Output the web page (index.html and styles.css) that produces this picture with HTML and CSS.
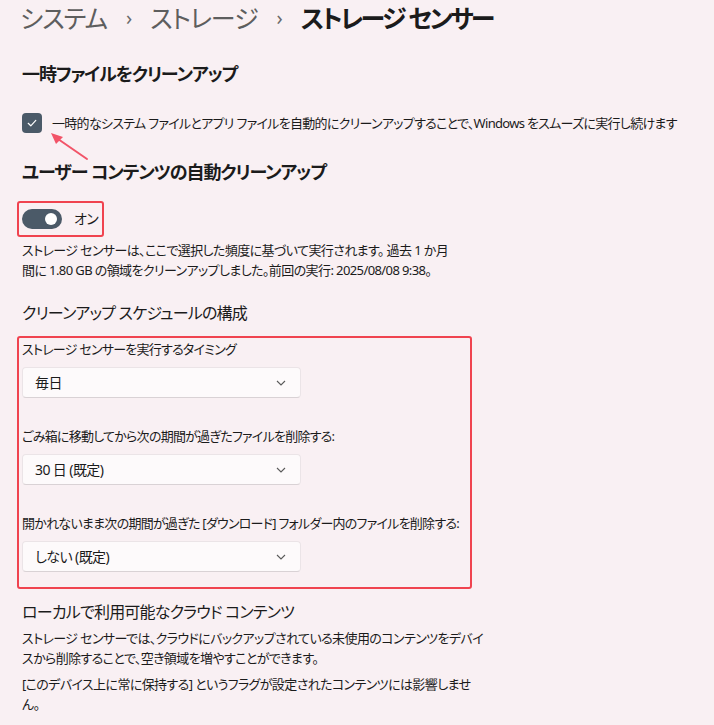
FILE: index.html
```html
<!DOCTYPE html>
<html lang="ja">
<head>
	<meta charset="UTF-8">
	<meta name="viewport" content="width=device-width, initial-scale=1.0">
	<title>ストレージ センサー</title>
	<link rel="stylesheet" href="styles.css">
</head>
<body>
	<main class="page">
		<nav class="crumbs">
			<span class="crumb">システム</span>
			<span class="crumb-sep">›</span>
			<span class="crumb">ストレージ</span>
			<span class="crumb-sep">›</span>
			<span class="crumb current">ストレージ センサー</span>
		</nav>

		<h2 class="section-title first">一時ファイルをクリーンアップ</h2>
		<label class="check-row">
			<span class="check-box">
				<svg width="12" height="12" viewBox="0 0 12 12"><path d="M2.2 6.3 L4.8 8.8 L9.8 3.4" fill="none" stroke="#fff" stroke-width="1.2" stroke-linecap="round" stroke-linejoin="round"/></svg>
			</span>
			<span>一時的なシステム ファイルとアプリ ファイルを自動的にクリーンアップすることで、Windows をスムーズに実行し続けます</span>
		</label>
		<!-- annotation arrow, sits over the page -->
		<svg class="note-arrow" width="50" height="34" viewBox="0 0 50 34">
			<path d="M46 30 L17 10" stroke="#f25468" stroke-width="2" stroke-linecap="round"/>
			<path d="M10 4 L22 8 L15 15 Z" fill="#f25468"/>
		</svg>

		<h2 class="section-title">ユーザー コンテンツの自動クリーンアップ</h2>
		<div class="toggle-row marked">
			<span class="toggle"><span class="knob"></span></span>
			<span class="toggle-label">オン</span>
		</div>
		<p class="desc tight">ストレージ センサーは、ここで選択した頻度に基づいて実行されます。 過去 1 か月<br>間に 1.80 GB の領域をクリーンアップしました。前回の実行: 2025/08/08 9:38。</p>

		<h3 class="sub-title">クリーンアップ スケジュールの構成</h3>
		<div class="schedule marked">
			<div class="field">
				<div class="field-label">ストレージ センサーを実行するタイミング</div>
				<div class="select"><span>毎日</span><svg class="chev" width="10" height="6" viewBox="0 0 10 6"><path d="M1 1 L5 5 L9 1" fill="none" stroke="#5a5a5a" stroke-width="1.1"/></svg></div>
			</div>
			<div class="field">
				<div class="field-label">ごみ箱に移動してから次の期間が過ぎたファイルを削除する:</div>
				<div class="select"><span>30 日 (既定)</span><svg class="chev" width="10" height="6" viewBox="0 0 10 6"><path d="M1 1 L5 5 L9 1" fill="none" stroke="#5a5a5a" stroke-width="1.1"/></svg></div>
			</div>
			<div class="field">
				<div class="field-label">開かれないまま次の期間が過ぎた [ダウンロード] フォルダー内のファイルを削除する:</div>
				<div class="select"><span>しない (既定)</span><svg class="chev" width="10" height="6" viewBox="0 0 10 6"><path d="M1 1 L5 5 L9 1" fill="none" stroke="#5a5a5a" stroke-width="1.1"/></svg></div>
			</div>
		</div>

		<h3 class="sub-title cloud">ローカルで利用可能なクラウド コンテンツ</h3>
		<p class="desc">ストレージ センサーでは、クラウドにバックアップされている未使用のコンテンツをデバイ<br>スから削除することで、空き領域を増やすことができます。</p>
		<p class="desc gap">[このデバイス上に常に保持する] というフラグが設定されたコンテンツには影響しませ<br>ん。</p>
	</main>
</body>
</html>
```

FILE: styles.css
```css
html, body {
  margin: 0;
  background: #f9f0f3;
}

body {
  font-family: "Noto Sans", "Noto Sans CJK JP", sans-serif;
  font-feature-settings: "palt";
  color: #1b1b1b;
  font-size: 13px;
  line-height: 20px;
  letter-spacing: -0.6px;
}

.page {
  position: relative;
  padding: 0 0 0 22px;
}

.crumbs {
  display: flex;
  align-items: center;
  gap: 12px;
  margin-left: -2px;
  font-size: 25px;
  line-height: 36px;
  letter-spacing: -1px;
  color: #5e5e5e;
  white-space: nowrap;
}
.crumb-sep {
  font-size: 20px;
  color: #6a6a6a;
  margin: 0 7px;
}
.crumb.current {
  color: #1b1b1b;
  font-weight: 600;
  letter-spacing: -2.5px;
}

.section-title {
  margin: 25px 0 0;
  font-size: 18px;
  line-height: 28px;
  letter-spacing: -1.1px;
  font-weight: 600;
}
.section-title.first {
  margin-top: 24px;
}

.check-row {
  display: flex;
  align-items: center;
  gap: 10px;
  margin-top: 25px;
  height: 20px;
  white-space: nowrap;
  letter-spacing: -0.7px;
}
.check-box {
  width: 20px;
  height: 20px;
  border-radius: 4px;
  background: #4b5a68;
  display: flex;
  align-items: center;
  justify-content: center;
  flex: none;
}

.note-arrow {
  position: absolute;
  left: 41px;
  top: 129px;
}

.marked {
  border: 2px solid #f0434f;
  border-radius: 3px;
}

.toggle-row {
  display: flex;
  align-items: center;
  gap: 12px;
  width: 87px;
  box-sizing: border-box;
  height: 36px;
  margin: 15px 0 0 -5px;
  padding-left: 3px;
  white-space: nowrap;
}
.toggle {
  width: 40px;
  height: 20px;
  border-radius: 10px;
  background: #4b5a68;
  display: flex;
  align-items: center;
  justify-content: flex-end;
  padding-right: 5px;
  box-sizing: border-box;
  flex: none;
}
.knob {
  width: 12px;
  height: 12px;
  border-radius: 50%;
  background: #fff;
}
.toggle-label {
  font-size: 14px;
}

.desc {
  max-width: 470px;
  margin: 3px 0 0;
}
.desc.gap {
  margin-top: 6px;
}

.sub-title {
  margin: 20px 0 0;
  font-size: 16px;
  line-height: 26px;
  letter-spacing: -0.8px;
  font-weight: 400;
}
.sub-title.cloud {
  margin-top: 10px;
}

.schedule {
  margin: 10px 0 0 -5px;
  width: 455px;
  box-sizing: border-box;
  padding: 1px 0 15px 3px;
}

.field + .field {
  margin-top: 28px;
}
.field-label {
  white-space: nowrap;
  letter-spacing: -0.75px;
}

.select {
  margin-top: 8px;
  width: 279px;
  height: 31px;
  box-sizing: border-box;
  background: #fdfafb;
  border: 1px solid #ebe4e7;
  border-bottom-color: #d9d2d5;
  border-radius: 4px;
  display: flex;
  align-items: center;
  justify-content: space-between;
  padding: 0 14px 0 12px;
}
.select span {
  font-size: 14px;
}
```
